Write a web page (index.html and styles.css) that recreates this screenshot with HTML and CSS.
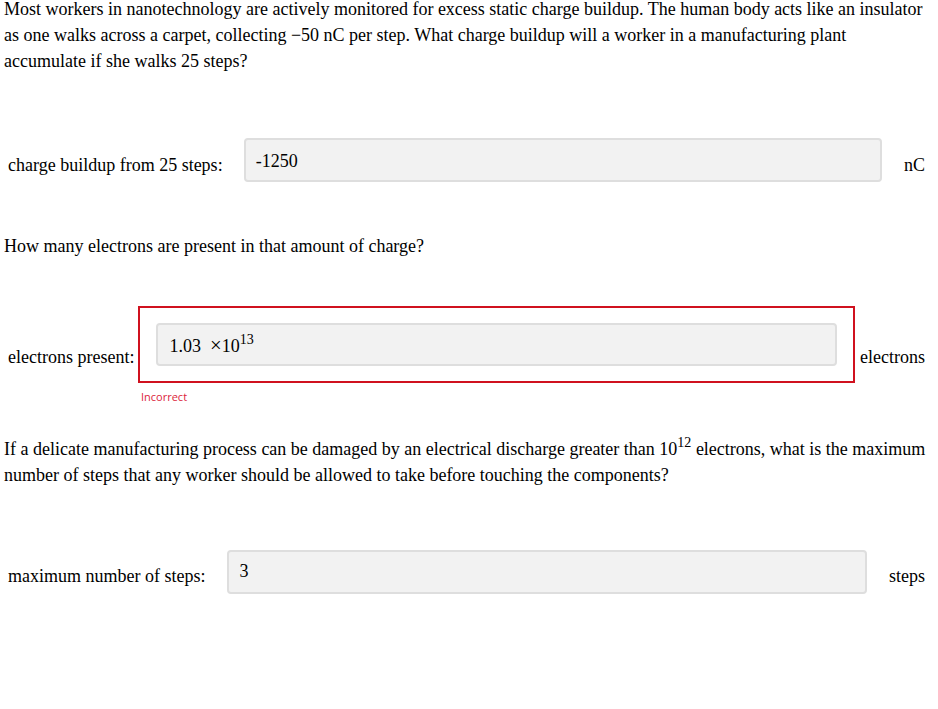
FILE: index.html
```html
<!DOCTYPE html>
<html>
  <head>
    <meta charset="utf-8" />
    <meta name="viewport" content="width=device-width, initial-scale=1" />
    <link rel="stylesheet" href="styles.css">
  </head>
  <body>
    <div class="problem">
      <p class="question first">
        Most workers in nanotechnology are actively monitored for excess static charge buildup. The human body acts like an insulator as one walks across a carpet, collecting &minus;50 nC per step. What charge buildup will a worker in a manufacturing plant accumulate if she walks 25 steps?
      </p>

      <div class="answer-row row-one">
        <label class="answer-label">charge buildup from 25 steps:</label>
        <div class="answer-input">-1250</div>
        <span class="answer-unit">nC</span>
      </div>

      <p class="question second">How many electrons are present in that amount of charge?</p>

      <div class="answer-row row-two">
        <label class="answer-label">electrons present:</label>
        <div class="answer-box incorrect">
          <div class="answer-input">1.03&nbsp; <span class="times">&times;</span>10<sup>13</sup></div>
        </div>
        <span class="answer-unit">electrons</span>
      </div>
      <div class="feedback">Incorrect</div>

      <p class="question third">
        If a delicate manufacturing process can be damaged by an electrical discharge greater than 10<sup>12</sup> electrons, what is the maximum number of steps that any worker should be allowed to take before touching the components?
      </p>

      <div class="answer-row row-three">
        <label class="answer-label">maximum number of steps:</label>
        <div class="answer-input">3</div>
        <span class="answer-unit">steps</span>
      </div>
    </div>
  </body>
</html>
```

FILE: styles.css
```css
html,
body {
  margin: 0;
  padding: 0;
}

body {
  font-family: "Liberation Serif", "Times New Roman", serif;
  font-size: 18px;
  line-height: 26px;
  color: #000;
  background: #fff;
}

.problem {
  padding: 0 8px 0 4px;
}

.question {
  margin: 0;
}
.question.first {
  margin-top: -4px;
}
.question.second {
  margin-top: 51px;
}
.question.third {
  margin-top: 32px;
}

sup {
  font-size: 0.78em;
  line-height: 0;
  vertical-align: 0;
  position: relative;
  top: -0.55em;
}

.times {
  font-size: 1.15em;
  line-height: 0;
}

.answer-row {
  display: flex;
  align-items: center;
  padding: 0 5px 0 4px;
}

.answer-input {
  flex: 1;
  box-sizing: border-box;
  height: 44px;
  padding: 8px 10px;
  background-color: #f2f2f2;
  border: 2px solid #dedede;
  border-radius: 4px;
}

.row-one {
  margin-top: 64px;
}
.row-one .answer-label,
.row-one .answer-unit {
  margin-top: 10px;
}
.row-one .answer-input {
  margin: 0 22px 0 21px;
}

.row-two {
  margin-top: 47px;
}
.row-two .answer-label,
.row-two .answer-unit {
  margin-top: 24px;
}
.answer-box {
  flex: 1;
  display: flex;
  margin: 0 5px 0 4px;
  padding: 15px 16px;
  border: 2px solid #d0111f;
}
.row-two .answer-input {
  height: 43px;
  padding-left: 11px;
}

.feedback {
  font-family: "Open Sans", "Noto Sans", sans-serif;
  font-size: 11px;
  line-height: 15px;
  color: #dc1e3c;
  margin: 6px 0 0 137px;
}

.row-three {
  margin-top: 62px;
}
.row-three .answer-label,
.row-three .answer-unit {
  margin-top: 8px;
}
.row-three .answer-input {
  margin: 0 22px;
  padding-top: 6px;
}
```
